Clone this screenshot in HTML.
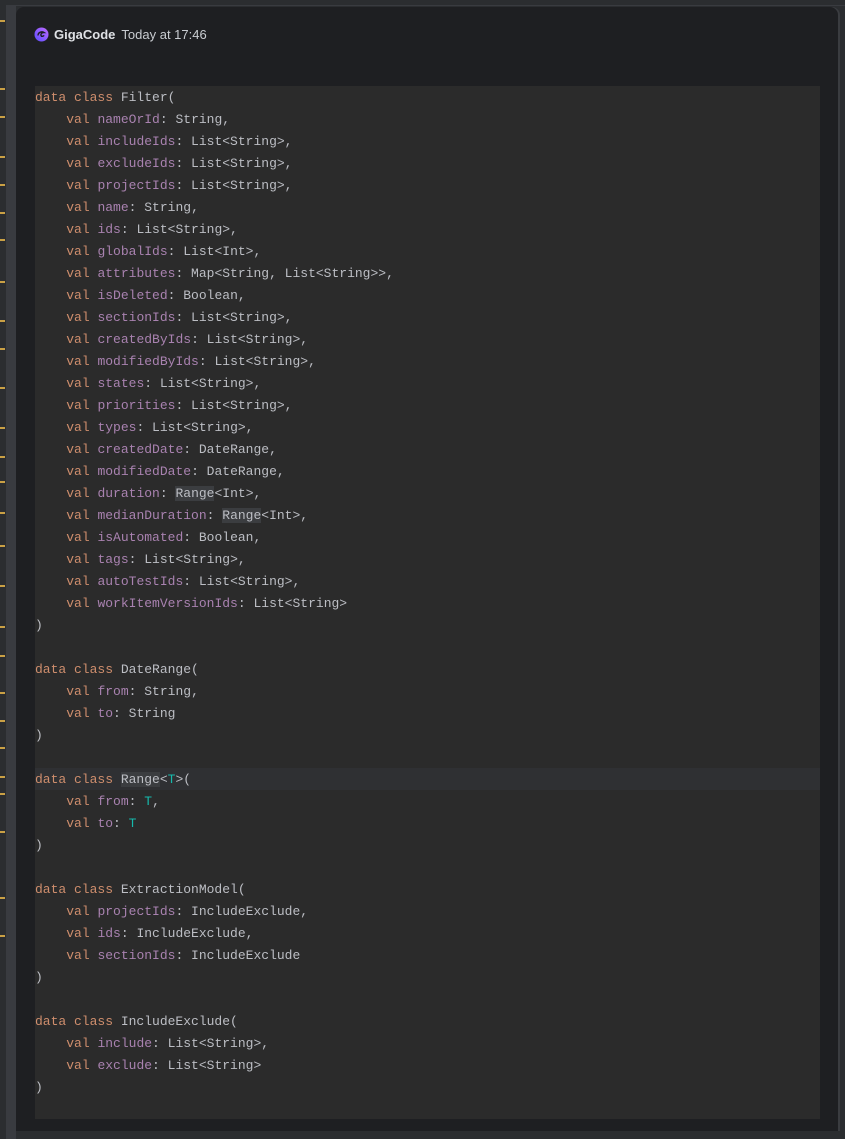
<!DOCTYPE html>
<html><head><meta charset="utf-8"><style>
html,body{margin:0;padding:0;width:845px;height:1139px;overflow:hidden;background:#2b2d30;}
.strip{position:absolute;left:0;top:0;width:6px;height:1139px;background:#2b2d30;}
.gut{position:absolute;left:6px;top:0;width:10px;height:1139px;background:#393b40;}
.tick{position:absolute;left:0;width:5px;height:2px;background:#c9a045;}
.topline{position:absolute;left:6px;top:0;width:839px;height:5px;background:#2b2d30;border-bottom:1px solid #393b40;}
.panel{position:absolute;left:16px;top:7px;width:822px;height:1124px;background:#1e1f22;border-radius:8px 8px 0 0;box-shadow:2px 0 0 #3a3c40;}
.hdr{position:absolute;left:34px;top:24px;height:20px;display:flex;align-items:center;font-family:"Liberation Sans",sans-serif;font-size:13px;color:#dfe1e5;}
.hdr b{font-weight:bold;margin-left:5px;}
.hdr span{margin-left:6px;font-size:13px;color:#c9ccd1;}
.code{position:absolute;left:35px;top:86px;width:785px;height:1033px;background:#2b2b2b;}
pre{margin:0;position:absolute;left:35px;top:87px;font-family:"Liberation Mono",monospace;font-size:13px;line-height:22px;color:#bcbec4;white-space:pre;}
.k{color:#cf8e6d}.p{color:#a982b0}.t{color:#16baac}
.hl{background:#3b3d40;}
.cur{position:absolute;left:35px;top:768px;width:785px;height:22px;background:#2f3033;}
</style></head><body>
<div class="strip"></div><div class="gut"></div><div class="topline"></div>
<div class="tick" style="top:20px"></div><div class="tick" style="top:88px"></div><div class="tick" style="top:116px"></div><div class="tick" style="top:156px"></div><div class="tick" style="top:184px"></div><div class="tick" style="top:212px"></div><div class="tick" style="top:239px"></div><div class="tick" style="top:281px"></div><div class="tick" style="top:320px"></div><div class="tick" style="top:348px"></div><div class="tick" style="top:387px"></div><div class="tick" style="top:427px"></div><div class="tick" style="top:456px"></div><div class="tick" style="top:481px"></div><div class="tick" style="top:512px"></div><div class="tick" style="top:545px"></div><div class="tick" style="top:585px"></div><div class="tick" style="top:626px"></div><div class="tick" style="top:655px"></div><div class="tick" style="top:692px"></div><div class="tick" style="top:720px"></div><div class="tick" style="top:747px"></div><div class="tick" style="top:776px"></div><div class="tick" style="top:793px"></div><div class="tick" style="top:831px"></div><div class="tick" style="top:897px"></div><div class="tick" style="top:935px"></div>
<div class="panel"></div>
<div class="hdr"><svg width="15" height="15" viewBox="0 0 15 15"><defs><linearGradient id="g" x1="0" y1="1" x2="1" y2="0"><stop offset="0" stop-color="#5b4dff"/><stop offset="1" stop-color="#c06bff"/></linearGradient></defs><circle cx="7.5" cy="7.5" r="7" fill="url(#g)"/><path d="M4 8.5c0-3 3.5-4.5 6-3-2 0-3.5 1.2-3 3 .4 1.3 2.5 1 3-.2" stroke="#1e1f22" stroke-width="1.4" fill="none"/></svg><b>GigaCode</b><span>Today at 17:46</span></div>
<div class="code"></div>
<div class="cur"></div>
<pre><span class="k">data class</span> Filter(
    <span class="k">val</span> <span class="p">nameOrId</span>: String,
    <span class="k">val</span> <span class="p">includeIds</span>: List&lt;String&gt;,
    <span class="k">val</span> <span class="p">excludeIds</span>: List&lt;String&gt;,
    <span class="k">val</span> <span class="p">projectIds</span>: List&lt;String&gt;,
    <span class="k">val</span> <span class="p">name</span>: String,
    <span class="k">val</span> <span class="p">ids</span>: List&lt;String&gt;,
    <span class="k">val</span> <span class="p">globalIds</span>: List&lt;Int&gt;,
    <span class="k">val</span> <span class="p">attributes</span>: Map&lt;String, List&lt;String&gt;&gt;,
    <span class="k">val</span> <span class="p">isDeleted</span>: Boolean,
    <span class="k">val</span> <span class="p">sectionIds</span>: List&lt;String&gt;,
    <span class="k">val</span> <span class="p">createdByIds</span>: List&lt;String&gt;,
    <span class="k">val</span> <span class="p">modifiedByIds</span>: List&lt;String&gt;,
    <span class="k">val</span> <span class="p">states</span>: List&lt;String&gt;,
    <span class="k">val</span> <span class="p">priorities</span>: List&lt;String&gt;,
    <span class="k">val</span> <span class="p">types</span>: List&lt;String&gt;,
    <span class="k">val</span> <span class="p">createdDate</span>: DateRange,
    <span class="k">val</span> <span class="p">modifiedDate</span>: DateRange,
    <span class="k">val</span> <span class="p">duration</span>: <span class="hl">Range</span>&lt;Int&gt;,
    <span class="k">val</span> <span class="p">medianDuration</span>: <span class="hl">Range</span>&lt;Int&gt;,
    <span class="k">val</span> <span class="p">isAutomated</span>: Boolean,
    <span class="k">val</span> <span class="p">tags</span>: List&lt;String&gt;,
    <span class="k">val</span> <span class="p">autoTestIds</span>: List&lt;String&gt;,
    <span class="k">val</span> <span class="p">workItemVersionIds</span>: List&lt;String&gt;
)

<span class="k">data class</span> DateRange(
    <span class="k">val</span> <span class="p">from</span>: String,
    <span class="k">val</span> <span class="p">to</span>: String
)

<span class="k">data class</span> <span class="hl">Range</span>&lt;<span class="t">T</span>&gt;(
    <span class="k">val</span> <span class="p">from</span>: <span class="t">T</span>,
    <span class="k">val</span> <span class="p">to</span>: <span class="t">T</span>
)

<span class="k">data class</span> ExtractionModel(
    <span class="k">val</span> <span class="p">projectIds</span>: IncludeExclude,
    <span class="k">val</span> <span class="p">ids</span>: IncludeExclude,
    <span class="k">val</span> <span class="p">sectionIds</span>: IncludeExclude
)

<span class="k">data class</span> IncludeExclude(
    <span class="k">val</span> <span class="p">include</span>: List&lt;String&gt;,
    <span class="k">val</span> <span class="p">exclude</span>: List&lt;String&gt;
)</pre>
</body></html>
